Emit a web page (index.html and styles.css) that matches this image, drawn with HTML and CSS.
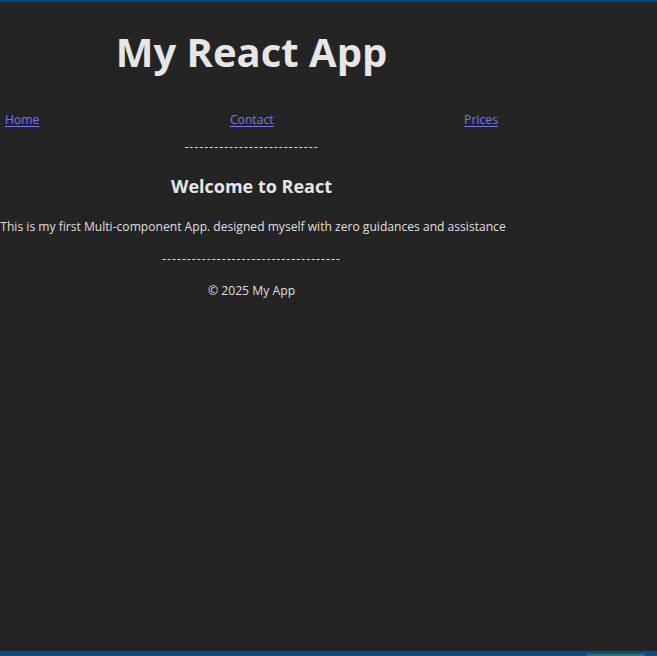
FILE: index.html
```html
<!DOCTYPE html>
<html lang="en">
<head>
<meta charset="utf-8">
<title>My React App</title>
<link rel="stylesheet" href="styles.css">
</head>
<body>
<div class="frame">
  <div class="app">
    <header class="header">
      <h1 class="title">My React App</h1>
      <nav class="nav">
        <a href="#" class="nav-link">Home</a>
        <a href="#" class="nav-link">Contact</a>
        <a href="#" class="nav-link">Prices</a>
      </nav>
      <div class="divider divider-short">---------------------------</div>
    </header>
    <main class="content">
      <h2 class="welcome">Welcome to React</h2>
      <p class="intro">This is my first Multi-component App. designed myself with zero guidances and assistance</p>
    </main>
    <footer class="footer">
      <div class="divider divider-long">------------------------------------</div>
      <p class="copy">© 2025 My App</p>
    </footer>
  </div>
  <div class="status-thumb"></div>
</div>
</body>
</html>
```
FILE: styles.css
```css
html, body {
  margin: 0;
  padding: 0;
  height: 100%;
}

body {
  background: #242424;
  color: rgba(255, 255, 255, 0.87);
  font-family: "Open Sans", "Noto Sans", sans-serif;
  font-size: 12.2px;
  line-height: 16px;
  overflow: hidden;
}

.frame {
  position: relative;
  box-sizing: border-box;
  height: 100%;
  border-top: 2px solid #0c4574;
  border-bottom: 5px solid #0e4c80;
}

.app {
  width: 493px;
  margin-left: 5px;
  display: flex;
  flex-direction: column;
  align-items: center;
  text-align: center;
}

.header,
.content,
.footer {
  display: flex;
  flex-direction: column;
  align-items: center;
  width: 100%;
}

.title {
  margin: 25.5px 0 0;
  font-size: 40px;
  line-height: 48px;
  font-weight: 700;
  color: #e6e6e6;
  white-space: nowrap;
}

.nav {
  align-self: stretch;
  display: flex;
  justify-content: space-between;
  margin-top: 36.8px;
}

.nav-link {
  color: #7474ff;
  text-decoration: underline;
  text-underline-offset: 2px;
}

.divider {
  white-space: nowrap;
  letter-spacing: 1.05px;
}

.divider-short {
  margin-top: 11px;
}

.welcome {
  margin: 18.4px 0 0;
  font-size: 18px;
  line-height: 24px;
  font-weight: 700;
  color: #e6e6e6;
  white-space: nowrap;
}

.intro {
  margin: 21.6px 0 0;
  padding-left: 3px;
  font-size: 12.1px;
  white-space: nowrap;
}

.divider-long {
  margin-top: 16px;
}

.copy {
  margin: 15.3px 0 0;
  white-space: nowrap;
}

.status-thumb {
  position: absolute;
  right: 12px;
  bottom: -5px;
  width: 59px;
  height: 2px;
  background: #3d6585;
}
```
